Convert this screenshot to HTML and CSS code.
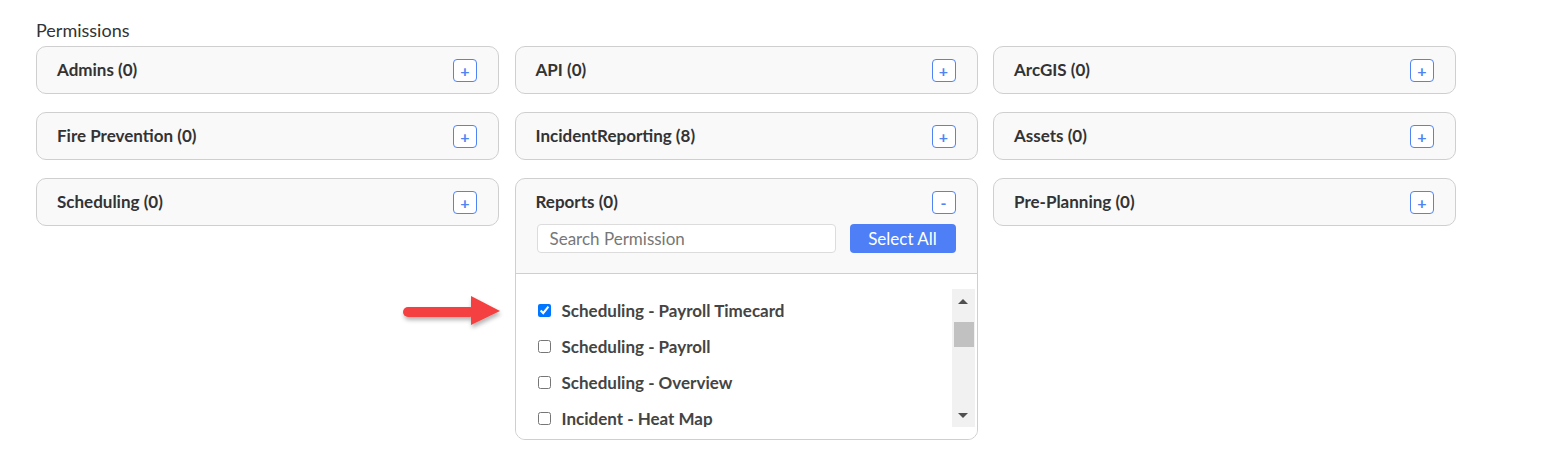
FILE: index.html
```html
<!DOCTYPE html>
<html lang="en">
<head>
    <meta charset="UTF-8">
    <meta name="viewport" content="width=device-width, initial-scale=1.0">
    <title>Permissions</title>
    <link rel="stylesheet" href="styles.css">
</head>
<body>
    <div class="page">
        <div class="section-label">Permissions</div>
        <div class="grid">
            <div class="card">
                <div class="card-head"><span class="card-title">Admins (0)</span><button class="toggle">+</button></div>
            </div>
            <div class="card">
                <div class="card-head"><span class="card-title">API (0)</span><button class="toggle">+</button></div>
            </div>
            <div class="card">
                <div class="card-head"><span class="card-title">ArcGIS (0)</span><button class="toggle">+</button></div>
            </div>
            <div class="card">
                <div class="card-head"><span class="card-title">Fire Prevention (0)</span><button class="toggle">+</button></div>
            </div>
            <div class="card">
                <div class="card-head"><span class="card-title">IncidentReporting (8)</span><button class="toggle">+</button></div>
            </div>
            <div class="card">
                <div class="card-head"><span class="card-title">Assets (0)</span><button class="toggle">+</button></div>
            </div>
            <div class="card">
                <div class="card-head"><span class="card-title">Scheduling (0)</span><button class="toggle">+</button></div>
            </div>
            <div class="card open">
                <div class="card-top">
                    <div class="card-head"><span class="card-title">Reports (0)</span><button class="toggle">-</button></div>
                    <div class="search-row">
                        <input type="text" class="search" placeholder="Search Permission">
                        <button class="select-all">Select All</button>
                    </div>
                </div>
                <div class="perm-body">
                    <ul class="perm-list">
                        <li><label><input type="checkbox" checked> Scheduling - Payroll Timecard</label></li>
                        <li><label><input type="checkbox"> Scheduling - Payroll</label></li>
                        <li><label><input type="checkbox"> Scheduling - Overview</label></li>
                        <li><label><input type="checkbox"> Incident - Heat Map</label></li>
                    </ul>
                    <div class="scrollbar">
                        <span class="sb-up"></span>
                        <div class="sb-track"><div class="sb-thumb"></div></div>
                        <span class="sb-down"></span>
                    </div>
                </div>
            </div>
            <div class="card">
                <div class="card-head"><span class="card-title">Pre-Planning (0)</span><button class="toggle">+</button></div>
            </div>
        </div>

        <!-- annotation arrow -->
        <svg class="pointer-arrow" width="110" height="44" viewBox="0 0 110 44">
            <defs>
                <filter id="sh" x="-20%" y="-40%" width="140%" height="180%">
                    <feDropShadow dx="1" dy="3" stdDeviation="2" flood-color="#000" flood-opacity="0.3"/>
                </filter>
            </defs>
            <g filter="url(#sh)" fill="#f4413f">
                <rect x="3" y="14" width="72" height="10" rx="5"/>
                <polygon points="71,3 100,18 71,32"/>
            </g>
        </svg>
    </div>
</body>
</html>
```

FILE: styles.css
```css
*{
    box-sizing: border-box;
}
body{
    margin: 0;
    font-family: Lato, "Open Sans", sans-serif;
    color: #333;
    background: #fff;
}
.page{
    position: relative;
    padding: 19px 0 0 36px;
}
.section-label{
    font-size: 18px;
    line-height: 22px;
    color: #333;
    margin-bottom: 5px;
}
.grid{
    display: grid;
    grid-template-columns: repeat(3, 463px);
    column-gap: 15.5px;
    row-gap: 18px;
    align-items: start;
}
.card{
    border: 1px solid #cfcfcf;
    border-radius: 10px;
    background: #f9f9f9;
    overflow: hidden;
}
.card-head{
    display: flex;
    justify-content: space-between;
    align-items: center;
    padding: 12px 21px 11px 20px;
}
.card-title{
    font-size: 17px;
    line-height: 20px;
    font-weight: bold;
    color: #333;
    margin-top: -2px;
}
.toggle{
    width: 24px;
    height: 23px;
    padding: 0;
    border: 1px solid #4f84f2;
    border-radius: 4px;
    background: #fff;
    color: #4f84f2;
    font-family: Lato, sans-serif;
    font-size: 16px;
    font-weight: bold;
    line-height: 19px;
}
.card.open .card-top{
    border-bottom: 1px solid #cfcfcf;
    padding-bottom: 20px;
}
.card.open .card-head{
    padding-bottom: 10px;
}
.search-row{
    display: flex;
    gap: 14px;
    padding: 0 21px 0 21px;
}
.search{
    width: 299px;
    height: 29px;
    padding: 0 12px;
    border: 1px solid #dcdcdc;
    border-radius: 4px;
    background: #fff;
    font-family: Lato, sans-serif;
    font-size: 17px;
    color: #333;
}
.search::placeholder{
    color: #777;
}
.select-all{
    width: 106px;
    height: 29px;
    border: none;
    border-radius: 4px;
    background: #4e7ff7;
    color: #fff;
    font-family: Lato, sans-serif;
    font-size: 17px;
}
.perm-body{
    display: flex;
    background: #fff;
    padding: 15px 2px 12px 22px;
}
.perm-list{
    flex: 1;
    list-style: none;
    margin: 0;
    padding: 3px 0 0 0;
    height: 138px;
    overflow: hidden;
}
.perm-list li{
    height: 36px;
    display: flex;
    align-items: center;
}
.perm-list label{
    display: flex;
    align-items: center;
    gap: 11px;
    font-size: 17px;
    font-weight: bold;
    color: #444;
}
.perm-list input{
    width: 13px;
    height: 13px;
    margin: 0;
}
.scrollbar{
    width: 23px;
    height: 138px;
    background: #f1f1f1;
    display: flex;
    flex-direction: column;
    align-items: center;
}
.sb-up, .sb-down{
    width: 0;
    height: 0;
    border-left: 5px solid transparent;
    border-right: 5px solid transparent;
}
.sb-up{
    margin-top: 10px;
    border-bottom: 5px solid #505050;
}
.sb-down{
    margin-bottom: 9px;
    border-top: 5px solid #505050;
}
.sb-track{
    flex: 1;
    width: 100%;
    padding: 18px 1px 0 2px;
}
.sb-thumb{
    height: 25px;
    background: #c1c1c1;
}
.pointer-arrow{
    position: absolute;
    left: 400px;
    top: 293px;
}
```
